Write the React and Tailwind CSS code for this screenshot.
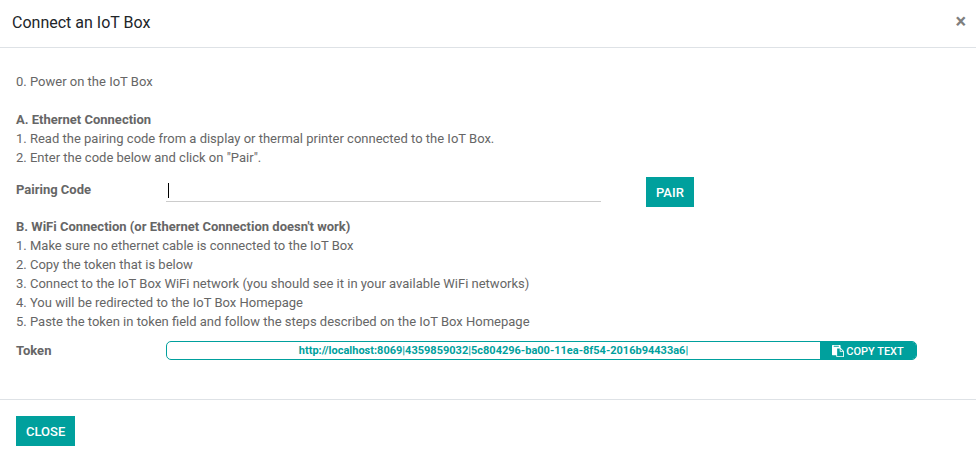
import { useState } from "react";

const TOKEN = "http://localhost:8069|4359859032|5c804296-ba00-11ea-8f54-2016b94433a6|";

function PasteIcon() {
  return (
    <svg viewBox="0 0 1792 1792" fill="currentColor" className="size-3" aria-hidden="true">
      <path d="M768 1664h896v-640h-416q-40 0-68-28t-28-68v-416h-384v1152zm256-1440v-64q0-13-9.5-22.5t-22.5-9.5h-704q-13 0-22.5 9.5t-9.5 22.5v64q0 13 9.5 22.5t22.5 9.5h704q13 0 22.5-9.5t9.5-22.5zm256 672h299l-299-299v299zm512 128v672q0 40-28 68t-68 28h-960q-40 0-68-28t-28-68v-160h-544q-40 0-68-28t-28-68v-1344q0-40 28-68t68-28h1088q40 0 68 28t28 68v328q21 13 36 28l408 408q28 28 48 76t20 88z" />
    </svg>
  );
}

function PrimaryButton({ children }) {
  return (
    <button
      type="button"
      className="h-[30px] shrink-0 bg-[#00a09d] px-[10px] pt-[2px] text-[13px] leading-5 font-medium text-white uppercase hover:bg-[#008784]"
    >
      {children}
    </button>
  );
}

function PairingInput() {
  const [code, setCode] = useState("");
  return (
    <div className="relative w-[58%] max-w-[435px]">
      <input
        id="pairing-code"
        type="text"
        value={code}
        onChange={(e) => setCode(e.target.value)}
        className={
          "block h-[25px] w-full border-b border-[#cccccc] px-[2px] text-[13px] text-[#666666] outline-none " +
          (code ? "caret-black" : "caret-transparent")
        }
      />
      {code === "" && (
        <span aria-hidden="true" className="pointer-events-none absolute top-[6px] left-[2px] h-[15px] w-px bg-black" />
      )}
    </div>
  );
}

export default function App() {
  return (
    <div
      role="dialog"
      aria-labelledby="dialog-title"
      className="bg-white font-[Roboto,'Liberation_Sans',sans-serif] text-[13px] leading-[19px] text-[#666666]"
    >
      <header className="flex h-12 items-start justify-between border-b border-[#dee2e6] pt-[11px] pr-[10px] pl-3">
        <h4 id="dialog-title" className="text-base leading-6 text-[#212529]">
          Connect an IoT Box
        </h4>
        <button type="button" aria-label="Close dialog" className="text-[20px] leading-5 font-bold text-[#7f7f7f]">
          ×
        </button>
      </header>

      <main className="px-4 pt-6 pb-[39px]">
        <p>0. Power on the IoT Box</p>

        <section className="mt-[19px]">
          <h5 className="font-bold">A. Ethernet Connection</h5>
          <p>1. Read the pairing code from a display or thermal printer connected to the IoT Box.</p>
          <p>2. Enter the code below and click on "Pair".</p>
          <div className="mt-[10px] flex">
            <label htmlFor="pairing-code" className="w-[150px] shrink-0 pt-[3px] font-bold">
              Pairing Code
            </label>
            <div className="mr-[43px] flex flex-1 gap-[45px]">
              <PairingInput />
              <PrimaryButton>Pair</PrimaryButton>
            </div>
          </div>
        </section>

        <section className="mt-[10px]">
          <h5 className="font-bold">B. WiFi Connection (or Ethernet Connection doesn't work)</h5>
          <p>1. Make sure no ethernet cable is connected to the IoT Box</p>
          <p>2. Copy the token that is below</p>
          <p>3. Connect to the IoT Box WiFi network (you should see it in your available WiFi networks)</p>
          <p>4. You will be redirected to the IoT Box Homepage</p>
          <p>5. Paste the token in token field and follow the steps described on the IoT Box Homepage</p>
          <div className="mt-[10px] flex">
            <span className="w-[150px] shrink-0 font-bold">Token</span>
            <div className="mr-[43px] flex h-[19px] flex-1 overflow-hidden rounded-[5px] border border-[#00a09d] text-[11px] leading-[17px] text-[#00a09d]">
              <span className="flex-1 text-center font-bold">{TOKEN}</span>
              <button
                type="button"
                onClick={() => navigator.clipboard?.writeText(TOKEN)}
                className="flex w-24 items-center justify-center gap-[2px] bg-[#00a09d] pt-px font-medium text-white uppercase"
              >
                <PasteIcon />
                Copy Text
              </button>
            </div>
          </div>
        </section>
      </main>

      <footer className="border-t border-[#dee2e6] p-4">
        <PrimaryButton>Close</PrimaryButton>
      </footer>
    </div>
  );
}
